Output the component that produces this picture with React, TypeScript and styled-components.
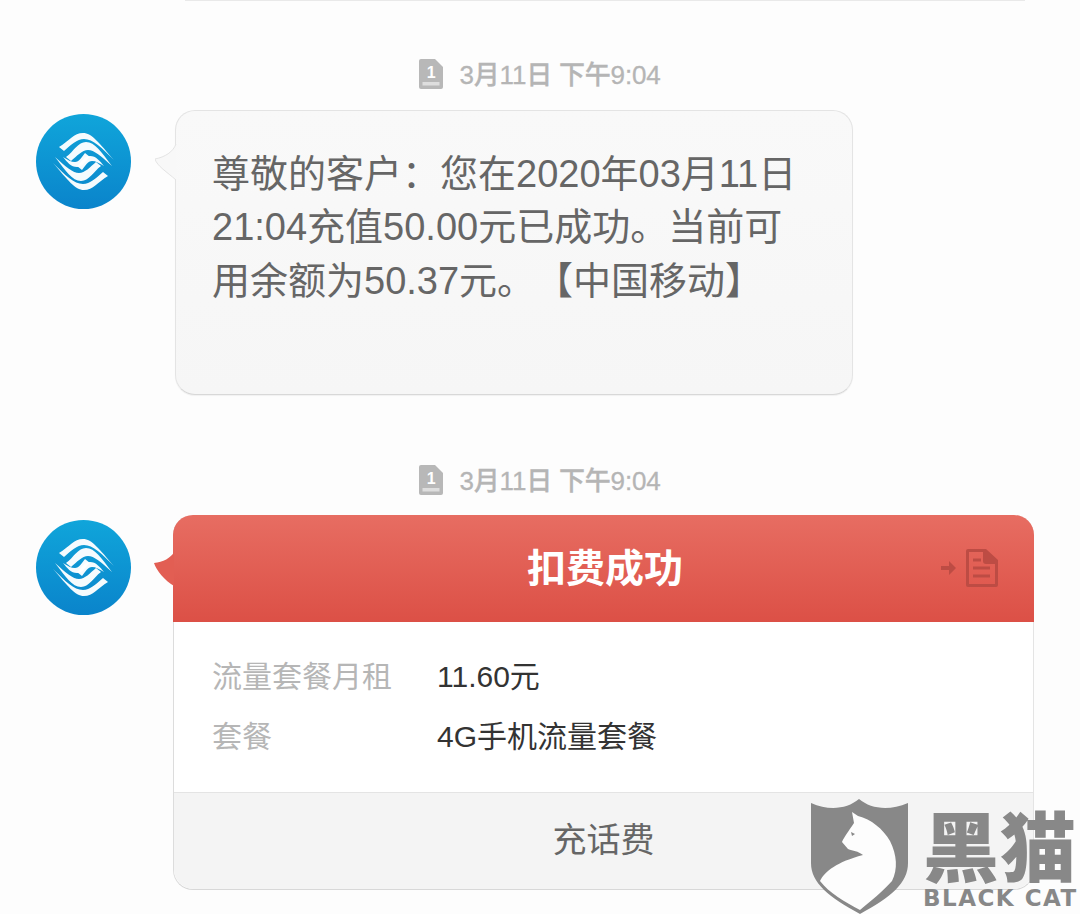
import React from "react";
import styled, { createGlobalStyle } from "styled-components";

const Global = createGlobalStyle`
  html, body { margin: 0; padding: 0; background: #fdfdfd; }
  body { font-family: "Liberation Sans", "Noto Sans CJK SC", sans-serif; text-spacing-trim: space-all; }
`;

const Page = styled.div`
  position: relative;
  width: 1080px;
  height: 914px;
  overflow: hidden;
  background: #fdfdfd;
`;

const TopEdge = styled.div`
  width: 840px;
  height: 1px;
  margin-left: 185px;
  background: #e9e9e9;
`;

const Stamp = styled.div<{ $top: number; $bottom: number }>`
  display: flex;
  align-items: center;
  justify-content: center;
  gap: 17px;
  height: 40px;
  margin-top: ${(p) => p.$top}px;
  margin-bottom: ${(p) => p.$bottom}px;
  padding-right: 1px;
  font-size: 26px;
  font-weight: 500;
  color: #b5b5b5;
  letter-spacing: -0.2px;
  -webkit-text-stroke: 0.3px #b5b5b5;
`;

const StampText = styled.span`
  margin-top: -4px;
`;

const Row = styled.div`
  display: flex;
  align-items: flex-start;
  padding-left: 36px;
`;

const Avatar = styled.svg<{ $top: number }>`
  flex: none;
  width: 95px;
  height: 95px;
  margin-top: ${(p) => p.$top}px;
`;

const Bubble = styled.div`
  position: relative;
  box-sizing: border-box;
  width: 678px;
  height: 285px;
  margin-left: 44px;
  padding: 37px 36px;
  background: linear-gradient(#f9f9f9, #f6f6f6);
  border: 1px solid #e4e4e4;
  border-bottom-color: #d8d8d8;
  border-radius: 20px;
  box-shadow: 0 1px 1px rgba(0, 0, 0, 0.05);
  font-size: 38px;
  line-height: 53.3px;
  color: #666;
`;

const Tail = styled.svg<{ $left: number; $top: number }>`
  position: absolute;
  left: ${(p) => p.$left}px;
  top: ${(p) => p.$top}px;
  width: 22px;
  height: 38px;
  z-index: 1;
`;

const Card = styled.div`
  position: relative;
  box-sizing: border-box;
  width: 861px;
  height: 375px;
  margin-left: 42px;
  display: flex;
  flex-direction: column;
  background: #fff;
  border-left: 1px solid #dcdcdc;
  border-right: 1px solid #e4e4e4;
  border-bottom: 1px solid #d8d8d8;
  border-radius: 20px;
`;

const CardHead = styled.div`
  position: relative;
  flex: none;
  height: 107px;
  margin: 0 -1px;
  display: flex;
  align-items: center;
  justify-content: center;
  background: linear-gradient(#e76d62, #dc5046);
  border-radius: 20px 20px 0 0;
  font-size: 39px;
  line-height: 50px;
  font-weight: 700;
  color: #fff;
`;

const HeadTitle = styled.span`
  margin-left: 3px;
`;

const HeadIcon = styled.svg`
  position: absolute;
  right: 34px;
  top: 34px;
  width: 60px;
  height: 38px;
`;

const Fields = styled.div`
  flex: 1;
  display: flex;
  flex-direction: column;
  padding-top: 22px;
  padding-left: 38px;
`;

const Field = styled.div`
  display: flex;
  align-items: center;
  height: 60px;
  font-size: 30px;
`;

const FieldLabel = styled.span`
  width: 225px;
  color: #b6b6b6;
`;

const FieldValue = styled.span`
  color: #333;
`;

const CardFoot = styled.div`
  flex: none;
  box-sizing: border-box;
  height: 97px;
  padding-bottom: 7px;
  display: flex;
  align-items: center;
  justify-content: center;
  background: #f4f4f4;
  border-top: 1px solid #e4e4e4;
  border-radius: 0 0 20px 20px;
  font-size: 34px;
  color: #666;
`;

const Mark = styled.div`
  position: absolute;
  left: 811px;
  top: 799px;
  display: flex;
  gap: 14px;
  color: #888;
`;

const Shield = styled.svg`
  flex: none;
  width: 98px;
  height: 115px;
`;

const MarkText = styled.div`
  display: flex;
  flex-direction: column;
  align-items: flex-start;
`;

const MarkTitle = styled.div`
  margin-top: 6px;
  height: 76px;
  font-size: 76px;
  line-height: 76px;
  font-weight: 900;
  font-family: "Noto Sans CJK SC", sans-serif;
  letter-spacing: 1px;
`;

const MarkSub = styled.div`
  margin-top: 5px;
  font-size: 23px;
  line-height: 24px;
  font-weight: 700;
  font-family: "DejaVu Sans", sans-serif;
  letter-spacing: 1.5px;
  white-space: nowrap;
`;

const Logo = ({ id, top }: { id: string; top: number }) => (
  <Avatar viewBox="0 0 95 95" $top={top}>
    <defs>
      <linearGradient id={id} x1="0" y1="0" x2="0" y2="1">
        <stop offset="0" stopColor="#10a5da" />
        <stop offset="1" stopColor="#0a84cb" />
      </linearGradient>
    </defs>
    <circle cx="47.5" cy="47.5" r="47.5" fill={`url(#${id})`} />
    <g fill="#fff" fillOpacity="0.96">
      <path d="M23 33 C33 27 38 19 47 19 C56 19 63 29 78 46 C66 34 57 25 48 25 C41 25 35 31 28 37 Z" />
      <path d="M30 43 C38 37 42 28 50 28 C59 28 65 38 76 52 C65 42 58 36 52 36 C46 36 41 42 35 47 Z" />
      <path d="M41 52 C46 48 48 42 54 42 C60 42 64 47 68 52 C63 49 60 47 56 47 C52 47 49 52 46 56 Z" />
      <path d="M72 62 C62 68 57 76 48 76 C39 76 32 66 17 49 C29 61 38 70 47 70 C54 70 60 64 67 58 Z" />
      <path d="M65 52 C57 58 53 67 45 67 C36 67 30 57 19 43 C30 53 37 59 43 59 C49 59 54 53 60 48 Z" />
      <path d="M54 43 C49 47 47 53 41 53 C35 53 31 48 27 43 C32 46 35 48 39 48 C43 48 46 43 49 39 Z" />
    </g>
  </Avatar>
);

const SimIcon = () => (
  <svg width="24" height="30" viewBox="0 0 24 30">
    <path d="M2 0 H16 L24 8 V28 a2 2 0 0 1 -2 2 H2 a2 2 0 0 1 -2 -2 V2 a2 2 0 0 1 2 -2 Z" fill="#b8b8b8" />
    <text x="12" y="19" textAnchor="middle" fontSize="16" fontWeight="700" fontFamily="Liberation Sans" fill="#fff" stroke="none">1</text>
    <rect x="3.5" y="23" width="17" height="3.5" fill="#dedede" />
  </svg>
);

export default function App() {
  return (
    <Page>
      <Global />
      <TopEdge />
      <Stamp $top={53} $bottom={16}>
        <SimIcon />
        <StampText>3月11日 下午9:04</StampText>
      </Stamp>
      <Row>
        <Logo id="a1" top={4} />
        <Bubble>
          <Tail viewBox="0 0 22 38" $left={-21} $top={33}>
            <path d="M21 0 C18 8 10 13 0 15 C2 22 12 28 21 36 Z" fill="#f8f8f8" />
            <path d="M21 0 C18 8 10 13 0 15 C2 22 12 28 21 36" fill="none" stroke="#e4e4e4" />
          </Tail>
          尊敬的客户：您在2020年03月11日<br />
          21:04充值50.00元已成功。当前可<br />
          用余额为50.37元。【中国移动】
        </Bubble>
      </Row>
      <Stamp $top={65} $bottom={15}>
        <SimIcon />
        <StampText>3月11日 下午9:04</StampText>
      </Stamp>
      <Row>
        <Logo id="a2" top={5} />
        <Card>
          <Tail viewBox="0 0 22 38" $left={-20} $top={37}>
            <path d="M20 0 C17 6 9 10 0 11 C2 18 11 29 20 34 Z" fill="#e25e53" />
          </Tail>
          <CardHead>
            <HeadTitle>扣费成功</HeadTitle>
            <HeadIcon viewBox="0 0 60 38">
              <g fill="#bd4c44">
                <path d="M1 17 H9 V12 L16 19 L9 26 V21 H1 Z" />
                <path
                  fillRule="evenodd"
                  d="M28 0 H46 L58 11 V36 a2 2 0 0 1 -2 2 H28 a2 2 0 0 1 -2 -2 V2 a2 2 0 0 1 2 -2 Z M29 3 V35 H55 V15 H46 a3 3 0 0 1 -3 -3 V3 Z M33 9.5 H41 V12.5 H33 Z M33 17.5 H50 V20.5 H33 Z M33 25.5 H50 V28.5 H33 Z"
                />
              </g>
            </HeadIcon>
          </CardHead>
          <Fields>
            <Field>
              <FieldLabel>流量套餐月租</FieldLabel>
              <FieldValue>11.60元</FieldValue>
            </Field>
            <Field>
              <FieldLabel>套餐</FieldLabel>
              <FieldValue>4G手机流量套餐</FieldValue>
            </Field>
          </Fields>
          <CardFoot>充话费</CardFoot>
        </Card>
      </Row>
      <Mark>
        <Shield viewBox="0 0 98 115">
          <path d="M0 4 C18 12 36 10 48 0 C60 10 78 12 97 4 V64 C97 84 80 98 49 115 C18 98 0 84 0 64 Z" fill="#888" />
          <path d="M41 13 L47 17 C60 20 72 30 79 42 C86 56 87 70 81 82 C72 92 60 102 49 111 C34 103 18 94 9 82 C14 72 26 63 52 56 C47 52 42 52 37 50 L31 43 C33 38 37 33 43 24 Z" fill="#fdfdfd" />
          <path d="M40 33 L44 35 L41 37 Z" fill="#888" />
        </Shield>
        <MarkText>
          <MarkTitle>黑猫</MarkTitle>
          <MarkSub>BLACK CAT</MarkSub>
        </MarkText>
      </Mark>
    </Page>
  );
}
